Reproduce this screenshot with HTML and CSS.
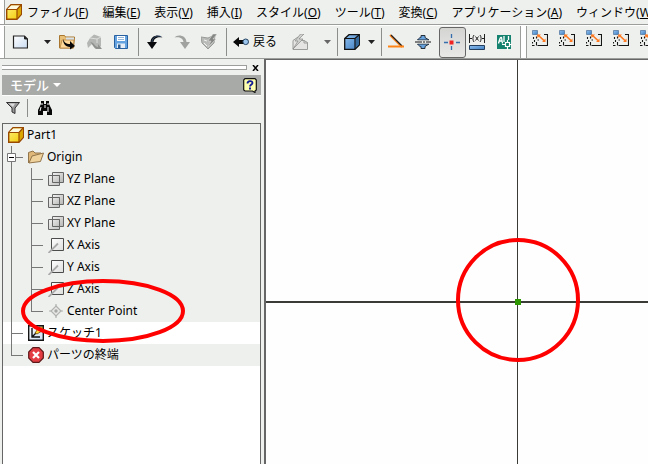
FILE: index.html
```html
<!DOCTYPE html>
<html lang="ja">
<head>
<meta charset="utf-8">
<title>Part1</title>
<link rel="stylesheet" href="styles.css">
</head>
<body>
<svg class="defs" aria-hidden="true">
  <defs>
    <linearGradient id="gold" x1="0" y1="0" x2="1" y2="1"><stop offset="0" stop-color="#fff27a"/><stop offset="1" stop-color="#f2c800"/></linearGradient>
    <linearGradient id="blue" x1="0" y1="0" x2="1" y2="1"><stop offset="0" stop-color="#8fc0ee"/><stop offset="1" stop-color="#3f7fc4"/></linearGradient>
    <linearGradient id="paper" x1="0" y1="0" x2="1" y2="1"><stop offset="0" stop-color="#ffffff"/><stop offset="1" stop-color="#c9dcf2"/></linearGradient>
    <linearGradient id="plane" x1="0" y1="0" x2="1" y2="1"><stop offset="0" stop-color="#f4f4f2"/><stop offset="1" stop-color="#b4b6b4"/></linearGradient>
    <linearGradient id="sheet" x1="0" y1="0" x2="1" y2="1"><stop offset="0" stop-color="#ffffff"/><stop offset="1" stop-color="#dcdedc"/></linearGradient>
  </defs>
  <symbol id="part" viewBox="0 0 16 16"><path d="M.7 5.500 5 .7h10.300v9.800L11 15.300H.7z" fill="url(#gold)" stroke="#9a4a00" stroke-width="1.400"/><path d="M1.500 5 5.300 1.400h9L11 5z" fill="#fffbe0"/><path d="m11 6 3.700-4v8L11 14z" fill="#dca800"/><path d="M11 5.500h-10M11 5.500 15 1M11 5.500V15" fill="none" stroke="#9a4a00" stroke-width="1.200"/></symbol>
  <symbol id="planes" viewBox="0 0 16 16"><path d="M4.500 1.500h11v10h-11z" fill="url(#plane)" stroke="#666"/><path d="M.5 4.500h11v10H.5z" fill="url(#plane)" fill-opacity=".75" stroke="#666"/><path d="M4.500 11.500v-7h7v7z" fill="none" stroke="#666"/></symbol>
  <symbol id="axis" viewBox="0 0 16 16"><path d="M3.500 1.500h12v12h-12z" fill="url(#sheet)" stroke="#4c4c4c"/><path d="M.5 16 10 6.500" stroke="#aaa" stroke-width="1.800"/></symbol>
  <symbol id="constraint" viewBox="0 0 16 16"><path d="M.5.5h5v4h-5z" fill="url(#blue)" stroke="#4c7099" stroke-width=".7"/><path d="M12 4.500h3.500v11H5.500M1.500 7v2M4.500 6.500v2M2.500 10v2M4.500 12v3.500M0 15.500h2.500M.5 12v1.500M5.500 10h1.500" fill="none" stroke="#151515" stroke-width="1.100"/><path d="m6 5 6.500 6" stroke="#ff7920" stroke-width="1.700"/><path d="M5 4.500h4L5.500 8zM13.500 12v-3.500l-3.500 3.500z" fill="#ff7920"/></symbol>
</svg>

<div class="app">
  <nav class="menubar">
    <span class="grip"></span>
    <svg class="icon"><use href="#part"/></svg>
    <button type="button">ファイル(<u>F</u>)</button>
    <button type="button">編集(<u>E</u>)</button>
    <button type="button">表示(<u>V</u>)</button>
    <button type="button">挿入(<u>I</u>)</button>
    <button type="button">スタイル(<u>O</u>)</button>
    <button type="button">ツール(<u>T</u>)</button>
    <button type="button">変換(<u>C</u>)</button>
    <button type="button">アプリケーション(<u>A</u>)</button>
    <button type="button">ウィンドウ(<u>W</u>)</button>
  </nav>

  <div class="toolbars">
    <span class="grip"></span>
    <button type="button" class="tool" aria-label="新規"><svg class="icon" viewBox="0 0 16 16"><path d="M1.500 2h11l3 3v9h-14z" fill="url(#paper)" stroke="#222" stroke-width="1.200"/><path d="M12.500 2v3h3" fill="#222" stroke="#222"/></svg></button>
    <button type="button" class="drop wide" aria-label="新規の種類"><svg viewBox="0 0 7 4"><path d="M0 0h7L3.500 4z" fill="#222"/></svg></button>
    <button type="button" class="tool" aria-label="開く"><svg class="icon" viewBox="0 0 16 16"><path d="M.5 1.500h5l1 1.500h9l-1 11H.5z" fill="#e8bf78" stroke="#a8762c"/><path d="M7 3.500h8v5H7z" fill="#d6e3ef"/><path d="m1 14 2-8h12l-1 8z" fill="#ffd999" stroke="#b88440" stroke-width=".8"/><path d="M4 5c1 3 3 5 7 5V7l5 5-5 3.500v-2.500C6 13 4 9 4 5z" fill="#080808"/></svg></button>
    <button type="button" class="tool" aria-label="更新"><svg class="icon" viewBox="0 0 16 16"><path d="M4 4 8 .5 15 3v9l-3 3-3-3-3-2-4 4-1-5z" fill="#b4b6b3"/><path d="m4 4 7 1 4-2M11 5v4" fill="none" stroke="#dddfdc"/><path d="M4 8c4 0 5 5 8 5v-3l4 5h-6C7 13 6 9 4 8z" fill="#8f918e"/></svg></button>
    <button type="button" class="tool" aria-label="保存"><svg class="icon" viewBox="0 0 16 16"><path d="M1.500 1.500h13v13h-12l-1-1z" fill="#65a3e0" stroke="#2860a0"/><path d="M4 2h8v5H4z" fill="#fff"/><path d="M5 3.500h6M5 5.500h6" stroke="#94b6d8"/><path d="M4 9.500h8V14H4z" fill="#e7eef5"/><path d="M5 10.500h2.500V14H5z" fill="#2b5c92"/></svg></button>
    <span class="sep"></span>
    <button type="button" class="tool" aria-label="元に戻す"><svg class="icon" viewBox="0 0 16 16"><path d="M15.500 3.500C13 0 4 .5 3.500 8H0l5 7 5-7H6.500C7 4 11 2.500 15.500 3.500z" fill="#07080c"/><path d="M14 2.500C9 1 5.500 3.500 5 8" fill="none" stroke="#5479a8" stroke-width=".6"/></svg></button>
    <button type="button" class="tool" aria-label="やり直し"><svg class="icon" viewBox="0 0 16 16"><path d="M.5 3.500C3 0 12 .5 12.500 8H16l-5 7-5-7h3.500C9 4 5 2.500.5 3.500z" fill="#a0a2a0"/></svg></button>
    <button type="button" class="tool" aria-label="更新を適用"><svg class="icon" viewBox="0 0 16 16"><path d="m0 3 7 1 7-3-1 8-6 6-6-6z" fill="#b9bbb8" stroke="#999b98"/><path d="m3 6 3 1M3 9l3 3" stroke="#f1f2f0"/><path d="m12 0-5 7h3l-3 6 8-8h-3l4-5z" fill="#858784" stroke="#e0e0de" stroke-width=".5"/></svg></button>
    <span class="sep"></span>
    <button type="button" class="back"><svg class="icon" viewBox="0 0 16 16"><path d="m0 8 6-5v3h5v4H6v3z" fill="#090909"/><circle cx="12.700" cy="7.800" r="2.800" fill="#9cc6ee" stroke="#25415d"/></svg><span>戻る</span></button>
    <button type="button" class="tool" aria-label="編集を更新"><svg class="icon" viewBox="0 0 16 16"><path d="M1 6.500 6 3l3 3.500h3l3.500 2v7H1z" fill="#e4e5e3" stroke="#9a9c99"/><path d="M12 6v3h4" fill="none" stroke="#9a9c99"/><path d="M8.500 0 3 7h3l-5 8 10-10H7l5-5z" fill="#cfd1ce" stroke="#898b88" stroke-width=".7"/></svg></button>
    <button type="button" class="drop wide" aria-label="更新の種類"><svg viewBox="0 0 7 4"><path d="M0 0h7L3.500 4z" fill="#666"/></svg></button>
    <span class="sep"></span>
    <button type="button" class="tool tight" aria-label="表示モード"><svg class="icon" viewBox="0 0 16 16"><path d="M.7 4.500 5 .7h10.300V11L11 15.300H.7z" fill="url(#blue)" stroke="#111" stroke-width="1.300"/><path d="m11.500 5 3.300-3v8.500l-3.300 3.500z" fill="#34699e"/><path d="M1 4.500h10L15 1M11 4.500V15" fill="none" stroke="#111" stroke-width="1.200"/></svg></button>
    <button type="button" class="drop" aria-label="表示モードの種類"><svg viewBox="0 0 7 4"><path d="M0 0h7L3.500 4z" fill="#222"/></svg></button>
    <span class="sep"></span>
    <button type="button" class="tool tight" aria-label="コンストラクション"><svg class="icon" viewBox="0 0 16 16"><path d="m2 1 12 12" stroke="#ff8418" stroke-width="2"/><path d="m3 1 11 11" stroke="#202020" stroke-width="1.200"/><path d="M0 12.500h16" stroke="#ff8418" stroke-width="2"/></svg></button>
    <button type="button" class="tool tight" aria-label="中心線"><svg class="icon" viewBox="0 0 16 16"><path d="M2.500 6C4 4 5 3.500 6 3.500v-2h4v2L14 6zM2.500 10C4 12 5 12.500 6 12.500v2h4v-2l4-2.500z" fill="#69a4df" stroke="#252f3a"/><path d="M0 6.500h16v3H0z" fill="#eef0ee"/><path d="M0 8h16" stroke="#111" stroke-width="1.200" stroke-dasharray="7 1 2 1"/></svg></button>
    <button type="button" class="tool tight pressed" aria-label="中心点" aria-pressed="true"><svg class="icon" viewBox="0 0 16 16"><path d="M7.500 0v4M7.500 12v4M0 8.500h4M12 8.500h4" stroke="#356ead" stroke-width="1.300"/><path d="M5.500 6.500h4v4h-4z" fill="#f12222"/></svg></button>
    <button type="button" class="tool tight" aria-label="計測寸法"><svg class="icon" viewBox="0 0 16 16"><path d="M.5 0v9M15.500 0v9M0 4.500h3M13 4.500h3" stroke="#202020"/><path d="M5 1C3.500 3 3.500 6 5 8M11 1c1.500 2 1.500 5 0 7M6.500 2.500l3 4M9.500 2.500l-3 4" fill="none" stroke="#202020"/><path d="M.5 11.500h15v4H.5z" fill="url(#blue)" stroke="#233d5c"/></svg></button>
    <button type="button" class="tool tight" aria-label="DWG を挿入"><svg class="icon" viewBox="0 0 16 16"><path d="M1 1h14v14H1z" fill="#14826f"/><path d="M2.500 9.500c1-4 2-7 3-6l1 6M3 7h3M8 2v6M12.500 2v4" fill="none" stroke="#fff" stroke-width="1.300"/><path d="M9.500 8.500h4v4h-4zM11.500 6v2.500M11.500 12.500V16M6 10.500h3.500M13.500 10.500H16" fill="none" stroke="#fff" stroke-width="1.200"/></svg></button>
    <span class="divider"></span>
    <div class="constraints">
      <button type="button" class="tool" aria-label="拘束 1"><svg class="icon"><use href="#constraint"/></svg></button>
      <button type="button" class="tool" aria-label="拘束 2"><svg class="icon"><use href="#constraint"/></svg></button>
      <button type="button" class="tool" aria-label="拘束 3"><svg class="icon"><use href="#constraint"/></svg></button>
      <button type="button" class="tool" aria-label="拘束 4"><svg class="icon"><use href="#constraint"/></svg></button>
      <button type="button" class="tool" aria-label="拘束 5"><svg class="icon"><use href="#constraint"/></svg></button>
    </div>
  </div>

  <div class="workspace">
    <aside class="browser">
      <div class="dock">
        <span class="dock-grip"></span>
        <button type="button" aria-label="閉じる"><svg viewBox="0 0 7 6"><path d="m1 0 5 6M6 0 1 6" stroke="#000" stroke-width="1.500"/></svg></button>
      </div>
      <header class="title">
        <button type="button">モデル<svg viewBox="0 0 8 4"><path d="M0 0h8L4 4z" fill="#fff"/></svg></button>
        <button type="button" class="help" aria-label="ヘルプ"><svg viewBox="0 0 14 15"><path d="M2 .7h10l1.300 1.300v10L12 13v1.500L9.500 13H2L.7 12V2z" fill="#ffffb0" stroke="#111" stroke-width="1.200"/><path d="M4.500 5.500C4.500 2.500 9.500 2.500 9.500 5 9.500 6.500 7 6.500 7 8.500" fill="none" stroke="#111b94" stroke-width="1.800"/><path d="M6 9.500h2v2H6z" fill="#111b94"/></svg></button>
      </header>
      <div class="filters">
        <button type="button" aria-label="フィルタ"><svg class="icon" viewBox="0 0 16 16"><path d="M1.500 2.500h13L10 8v5.500L7 12V8z" fill="#999" stroke="#333"/><path d="M4 3.500h6L8 7z" fill="#ddd"/></svg></button>
        <span class="rule"></span>
        <button type="button" aria-label="検索"><svg class="icon" viewBox="0 0 16 16"><path d="M4 1h3v3h2V1h3v3l3 6v5h-5v-4H6v4H1v-5l3-6z" fill="#080808"/><path d="M5 3v2M11 3v2M4 7l-1 4M8 5v3M11 7v5" stroke="#fff"/></svg></button>
      </div>
      <ul class="tree">
        <li><svg class="icon"><use href="#part"/></svg><span>Part1</span></li>
        <li><span class="rail tee first"><svg class="toggle" viewBox="0 0 9 9"><path d="M.5.5h8v8h-8z" fill="#fff" stroke="#777"/><path d="M2 4.500h5" stroke="#000"/></svg></span><svg class="icon" viewBox="0 0 16 16"><path d="M.5 14V3.500L5 2l2 2h6v3" fill="#dfb879" stroke="#92744b"/><path d="m1 14 3-7 11.500-3-3 8.500z" fill="#efd29b" stroke="#92744b"/></svg><span>Origin</span></li>
        <li><span class="rail line"></span><span class="rail tee"></span><svg class="icon"><use href="#planes"/></svg><span>YZ Plane</span></li>
        <li><span class="rail line"></span><span class="rail tee"></span><svg class="icon"><use href="#planes"/></svg><span>XZ Plane</span></li>
        <li><span class="rail line"></span><span class="rail tee"></span><svg class="icon"><use href="#planes"/></svg><span>XY Plane</span></li>
        <li><span class="rail line"></span><span class="rail tee"></span><svg class="icon"><use href="#axis"/></svg><span>X Axis</span></li>
        <li><span class="rail line"></span><span class="rail tee"></span><svg class="icon"><use href="#axis"/></svg><span>Y Axis</span></li>
        <li><span class="rail line"></span><span class="rail tee"></span><svg class="icon"><use href="#axis"/></svg><span>Z Axis</span></li>
        <li><span class="rail line"></span><span class="rail elbow"></span><svg class="icon" viewBox="0 0 16 16"><path d="m8 3 5 5-5 5-5-5z" fill="#e8e9e7" stroke="#b0b2af" stroke-width="1.200"/><path d="M8 1v3M8 12v3M1 8h3M12 8h3" stroke="#b0b2af" stroke-width="1.200"/><circle cx="8" cy="8" r="1.700" fill="#a6a8a5"/></svg><span>Center Point</span></li>
        <li class="selected"><span class="rail tee"></span><svg class="icon" viewBox="0 0 16 16"><path d="M.7.7h14.600v14.600H.7z" fill="url(#paper)" stroke="#151515" stroke-width="1.400"/><path d="M4 3v9h8M4 12l5-5" fill="none" stroke="#111" stroke-width="1.400"/><path d="m7 8 4-6h4l-1 4-5 3z" fill="#ffd733" stroke="#5c3400" stroke-width=".7"/></svg><span>スケッチ1</span></li>
        <li><span class="rail elbow"></span><svg class="icon" viewBox="0 0 16 16"><path d="M5 .7h6L15.300 5v6L11 15.300H5L.7 11V5z" fill="#e33c42" stroke="#5d1717" stroke-width="1.200"/><path d="m5 5 6 6m0-6-6 6" stroke="#fff" stroke-width="2.200"/></svg><span>パーツの終端</span></li>
      </ul>
      <svg class="mark" viewBox="0 0 164 64"><ellipse cx="82" cy="32" rx="80" ry="30" fill="none" stroke="#f00" stroke-width="4"/></svg>
    </aside>
    <main class="canvas">
      <svg width="100%" height="100%" aria-label="スケッチ平面">
        <path d="M251.500 0V2000" stroke="#3a3a36"/>
        <path d="M0 242H4000" stroke="#3a3a36" stroke-width="2"/>
        <path d="M249 239h6v6h-6z" fill="#2e9600"/>
        <circle cx="252" cy="240" r="60" fill="none" stroke="#f00" stroke-width="4"/>
      </svg>
    </main>
  </div>
</div>
</body>
</html>
```

FILE: styles.css
```css
* { box-sizing: border-box; }

body {
  margin: 0;
  background: #eef0ee;
  color: #000;
  font: 12px/16px "Noto Sans", "Noto Sans CJK JP", sans-serif;
}

button {
  margin: 0;
  padding: 0;
  border: 0;
  background: none;
  color: inherit;
  font: inherit;
  white-space: nowrap;
}

svg { display: block; flex: none; }
.icon { width: 16px; height: 16px; }
.defs { position: absolute; width: 0; height: 0; }

.app {
  display: flex;
  flex-direction: column;
  height: 100vh;
  overflow: hidden;
}

.menubar, .toolbars {
  display: flex;
  align-items: center;
  flex: none;
  overflow: hidden;
}

.menubar {
  height: 25px;
  border-bottom: 1px solid #9c9e9c;
}
.menubar .icon { margin-right: 5px; }
.menubar button { flex: none; margin-right: 14px; padding-top: 1px; }

.grip {
  flex: none;
  align-self: stretch;
  width: 5px;
  margin-right: 1px;
  background: #fff;
  border-right: 1px solid #9c9e9c;
}
.toolbars .grip { margin-right: 2px; }

.toolbars {
  height: 34px;
  border-top: 1px solid #fff;
  border-bottom: 1px solid #9c9e9c;
}

.tool {
  display: flex;
  align-items: center;
  flex: none;
  width: 27px;
  height: 31px;
  padding-left: 5px;
}
.tight { padding-left: 3px; }
.pressed {
  padding-left: 4px;
  border: 1px solid #666;
  border-radius: 3px;
  background: linear-gradient(#d4d4d2, #e8e8e6);
}

.drop { flex: none; width: 10px; height: 31px; padding-right: 3px; }
.drop svg { width: 7px; height: 4px; margin-left: auto; }
.wide { width: 20px; }

.sep {
  flex: none;
  width: 1px;
  height: 28px;
  margin: 0 3px;
  background: #8c8e8c;
}

.back {
  display: flex;
  align-items: center;
  gap: 4px;
  flex: none;
  width: 57px;
  padding-left: 3px;
}

.divider {
  flex: none;
  align-self: stretch;
  width: 7px;
  background: #fff;
  border: solid #9c9e9c;
  border-width: 0 1px;
}
.constraints { display: flex; align-self: flex-start; }
.constraints .tool { height: 24px; }

.workspace {
  display: flex;
  flex: 1;
  min-height: 0;
}

.browser {
  position: relative;
  display: flex;
  flex-direction: column;
  flex: none;
  width: 264px;
  padding: 1px 3px 0 2px;
}

.dock {
  display: flex;
  align-items: center;
  gap: 5px;
  height: 15px;
  padding-right: 2px;
}
.dock-grip {
  flex: 1;
  height: 5px;
  border: solid #9c9e9c;
  border-width: 1px 1px 1px 0;
  background: #fff;
}
.dock svg { width: 7px; height: 6px; }

.title {
  display: flex;
  align-items: center;
  justify-content: space-between;
  height: 21px;
  padding: 0 4px 0 8px;
  background: #a8aaa7;
  border-bottom: 1px solid #fff;
  color: #fff;
  font-size: 13px;
  font-weight: 500;
}
.title button { display: flex; align-items: center; gap: 4px; }
.title button svg { width: 8px; height: 4px; }
.title .help svg { width: 14px; height: 15px; }

.filters {
  display: flex;
  align-items: center;
  height: 27px;
  padding: 0 3px 3px;
}
.rule { width: 1px; height: 18px; margin: 0 9px 0 6px; background: #8c8e8c; }

.tree {
  flex: 1;
  margin: 0;
  padding: 0;
  border: solid #666;
  border-width: 1px 1px 0;
  background: #fff;
  list-style: none;
}
.tree li {
  display: flex;
  align-items: center;
  height: 22px;
  padding-left: 5px;
  background: #eef0ee;
}
.tree li.selected { background: #fff; }
.tree li > span:last-child { margin-left: 3px; white-space: nowrap; }

.rail {
  display: flex;
  align-items: center;
  flex: none;
  width: 20px;
  height: 22px;
  background-repeat: no-repeat;
}
.line {
  background-image: linear-gradient(#777, #777);
  background-position: 3px 0;
  background-size: 1px 22px;
}
.tee {
  background-image: linear-gradient(#777, #777), linear-gradient(#777, #777);
  background-position: 3px 0, 3px 11px;
  background-size: 1px 22px, 12px 1px;
}
.elbow {
  background-image: linear-gradient(#777, #777), linear-gradient(#777, #777);
  background-position: 3px 0, 3px 11px;
  background-size: 1px 11px, 12px 1px;
}
.toggle { width: 9px; height: 9px; margin-left: -1px; }

.mark {
  position: absolute;
  top: 220px;
  left: 21px;
  width: 164px;
  height: 64px;
}

.canvas {
  flex: 1;
  min-width: 0;
  overflow: hidden;
  border: solid #666;
  border-width: 1px 0 0 2px;
  background: #fefefe;
}
```
